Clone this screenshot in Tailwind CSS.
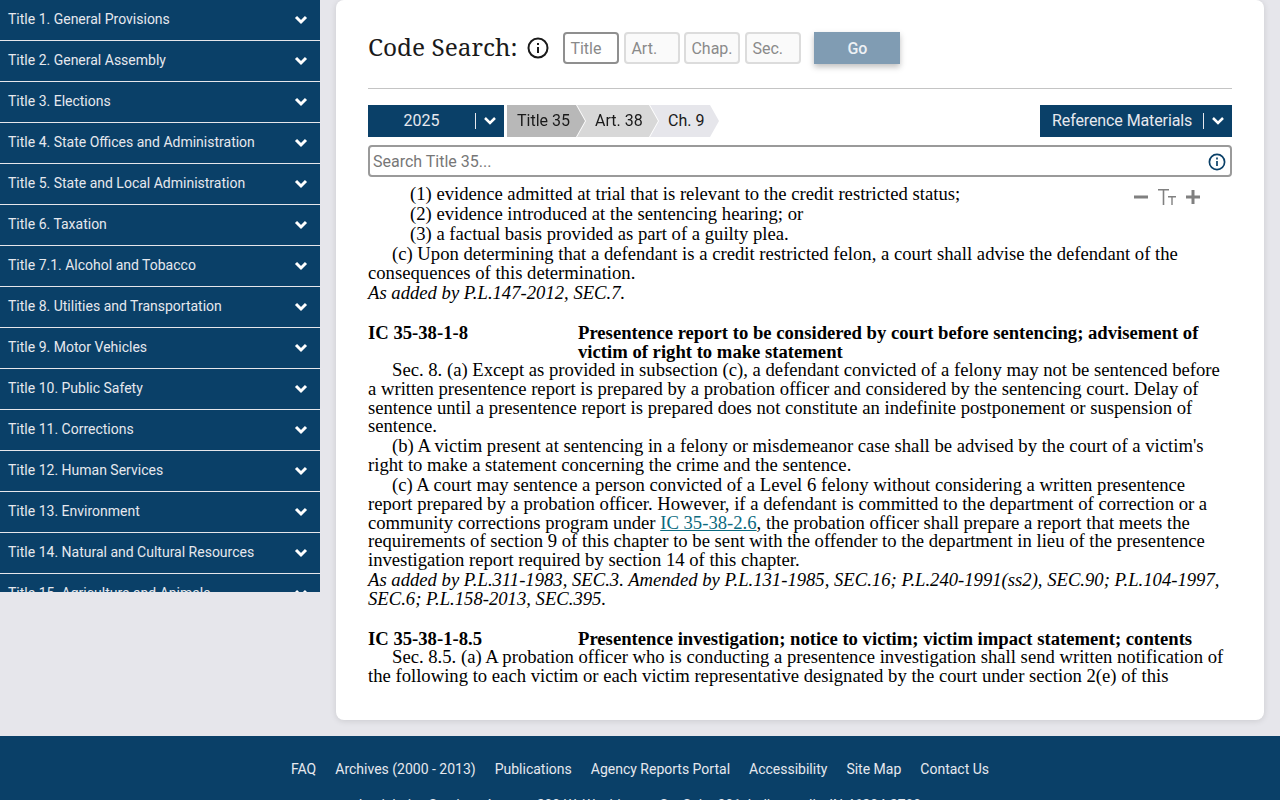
<!DOCTYPE html>
<html lang="en">
<head>
  <meta charset="UTF-8">
  <title>Indiana Code</title>
  <script src="https://cdn.jsdelivr.net/npm/@tailwindcss/browser@4"></script>
</head>
<body class="h-[800px] overflow-hidden bg-[#e6e6eb] font-['Roboto',sans-serif]">
  <div class="flex h-[736px] items-start">
    <!-- title list -->
    <nav class="h-[592px] w-[320px] shrink-0 overflow-hidden bg-[#0a4068] text-[14px] text-[#e6e8ee]">
      <div class="flex h-[41px] items-center justify-between border-b border-[#e6e6eb] pb-[1px] pl-2 pr-3"><span>Title 1. General Provisions</span><svg class="h-3 w-3.5" viewBox="0 0 14 12" fill="none" stroke="#fff" stroke-width="3"><path d="M2 3l5 5 5-5"/></svg></div>
      <div class="flex h-[41px] items-center justify-between border-b border-[#e6e6eb] pb-[1px] pl-2 pr-3"><span>Title 2. General Assembly</span><svg class="h-3 w-3.5" viewBox="0 0 14 12" fill="none" stroke="#fff" stroke-width="3"><path d="M2 3l5 5 5-5"/></svg></div>
      <div class="flex h-[41px] items-center justify-between border-b border-[#e6e6eb] pb-[1px] pl-2 pr-3"><span>Title 3. Elections</span><svg class="h-3 w-3.5" viewBox="0 0 14 12" fill="none" stroke="#fff" stroke-width="3"><path d="M2 3l5 5 5-5"/></svg></div>
      <div class="flex h-[41px] items-center justify-between border-b border-[#e6e6eb] pb-[1px] pl-2 pr-3"><span>Title 4. State Offices and Administration</span><svg class="h-3 w-3.5" viewBox="0 0 14 12" fill="none" stroke="#fff" stroke-width="3"><path d="M2 3l5 5 5-5"/></svg></div>
      <div class="flex h-[41px] items-center justify-between border-b border-[#e6e6eb] pb-[1px] pl-2 pr-3"><span>Title 5. State and Local Administration</span><svg class="h-3 w-3.5" viewBox="0 0 14 12" fill="none" stroke="#fff" stroke-width="3"><path d="M2 3l5 5 5-5"/></svg></div>
      <div class="flex h-[41px] items-center justify-between border-b border-[#e6e6eb] pb-[1px] pl-2 pr-3"><span>Title 6. Taxation</span><svg class="h-3 w-3.5" viewBox="0 0 14 12" fill="none" stroke="#fff" stroke-width="3"><path d="M2 3l5 5 5-5"/></svg></div>
      <div class="flex h-[41px] items-center justify-between border-b border-[#e6e6eb] pb-[1px] pl-2 pr-3"><span>Title 7.1. Alcohol and Tobacco</span><svg class="h-3 w-3.5" viewBox="0 0 14 12" fill="none" stroke="#fff" stroke-width="3"><path d="M2 3l5 5 5-5"/></svg></div>
      <div class="flex h-[41px] items-center justify-between border-b border-[#e6e6eb] pb-[1px] pl-2 pr-3"><span>Title 8. Utilities and Transportation</span><svg class="h-3 w-3.5" viewBox="0 0 14 12" fill="none" stroke="#fff" stroke-width="3"><path d="M2 3l5 5 5-5"/></svg></div>
      <div class="flex h-[41px] items-center justify-between border-b border-[#e6e6eb] pb-[1px] pl-2 pr-3"><span>Title 9. Motor Vehicles</span><svg class="h-3 w-3.5" viewBox="0 0 14 12" fill="none" stroke="#fff" stroke-width="3"><path d="M2 3l5 5 5-5"/></svg></div>
      <div class="flex h-[41px] items-center justify-between border-b border-[#e6e6eb] pb-[1px] pl-2 pr-3"><span>Title 10. Public Safety</span><svg class="h-3 w-3.5" viewBox="0 0 14 12" fill="none" stroke="#fff" stroke-width="3"><path d="M2 3l5 5 5-5"/></svg></div>
      <div class="flex h-[41px] items-center justify-between border-b border-[#e6e6eb] pb-[1px] pl-2 pr-3"><span>Title 11. Corrections</span><svg class="h-3 w-3.5" viewBox="0 0 14 12" fill="none" stroke="#fff" stroke-width="3"><path d="M2 3l5 5 5-5"/></svg></div>
      <div class="flex h-[41px] items-center justify-between border-b border-[#e6e6eb] pb-[1px] pl-2 pr-3"><span>Title 12. Human Services</span><svg class="h-3 w-3.5" viewBox="0 0 14 12" fill="none" stroke="#fff" stroke-width="3"><path d="M2 3l5 5 5-5"/></svg></div>
      <div class="flex h-[41px] items-center justify-between border-b border-[#e6e6eb] pb-[1px] pl-2 pr-3"><span>Title 13. Environment</span><svg class="h-3 w-3.5" viewBox="0 0 14 12" fill="none" stroke="#fff" stroke-width="3"><path d="M2 3l5 5 5-5"/></svg></div>
      <div class="flex h-[41px] items-center justify-between border-b border-[#e6e6eb] pb-[1px] pl-2 pr-3"><span>Title 14. Natural and Cultural Resources</span><svg class="h-3 w-3.5" viewBox="0 0 14 12" fill="none" stroke="#fff" stroke-width="3"><path d="M2 3l5 5 5-5"/></svg></div>
      <div class="flex h-[41px] items-center justify-between border-b border-[#e6e6eb] pb-[1px] pl-2 pr-3"><span>Title 15. Agriculture and Animals</span><svg class="h-3 w-3.5" viewBox="0 0 14 12" fill="none" stroke="#fff" stroke-width="3"><path d="M2 3l5 5 5-5"/></svg></div>
    </nav>

    <main class="ml-4 h-[720px] w-[928px] overflow-hidden rounded-lg bg-white px-8 shadow-[0_1px_6px_rgba(0,0,0,0.12)]">
      <!-- code search -->
      <div class="flex h-[89px] items-center border-b border-[#c4c4c4] pt-[8px]">
        <h1 class="pb-[2px] font-['Noto_Serif','DejaVu_Serif',serif] text-[24.4px] text-[#1a1a1a]">Code Search:</h1>
        <svg class="ml-[10px] h-[22px] w-[22px]" viewBox="0 0 22 22" fill="none" stroke="#1a1a1a" stroke-width="2"><circle cx="11" cy="11" r="9.5"/><path d="M11 10v6M11 6v2"/></svg>
        <div class="ml-[14px] flex h-8 w-14 items-center rounded border-2 border-[#8f8f8f] pl-[5px] pt-px text-base text-[#8a8a8a]">Title</div>
        <div class="ml-[5px] flex h-8 w-14 items-center rounded border-2 border-[#dcdcdc] bg-[#fafafa] pl-[5px] pt-px text-base text-[#8a8a8a]">Art.</div>
        <div class="ml-[4px] flex h-8 w-14 items-center rounded border-2 border-[#dcdcdc] bg-[#fafafa] pl-[5px] pt-px text-base text-[#8a8a8a]">Chap.</div>
        <div class="ml-[5px] flex h-8 w-14 items-center rounded border-2 border-[#dcdcdc] bg-[#fafafa] pl-[5px] pt-px text-base text-[#8a8a8a]">Sec.</div>
        <button class="ml-[13px] h-8 w-[86px] bg-[#809cb3] pt-px text-base font-medium text-[#eef1f5] shadow-[0_3px_6px_rgba(0,0,0,0.25)]">Go</button>
      </div>

      <!-- breadcrumb row -->
      <div class="mt-4 flex h-8 items-center text-base">
        <div class="flex h-8 w-[136px] items-center bg-[#0a4068] text-[#e6e8ee]">
          <span class="w-[107px] text-center">2025</span>
          <span class="h-4 w-px bg-[#e6e8ee]"></span>
          <svg class="ml-[7px] h-3 w-3.5" viewBox="0 0 14 12" fill="none" stroke="#fff" stroke-width="2.5"><path d="M2 3l5 5 5-5"/></svg>
        </div>
        <div class="ml-[3px] flex text-[#1a1a1a]">
          <div class="relative z-30 [filter:drop-shadow(1px_0_0_#fff)]"><div class="flex h-8 w-[78px] items-center bg-[#b8b8b8] pl-[10px] [clip-path:polygon(0_0,69px_0,100%_50%,69px_100%,0_100%)]">Title 35</div></div>
          <div class="relative z-20 -ml-[9px] [filter:drop-shadow(1px_0_0_#fff)]"><div class="flex h-8 w-[82px] items-center bg-[#d8d8d8] pl-[19px] [clip-path:polygon(0_0,73px_0,100%_50%,73px_100%,0_100%)]">Art. 38</div></div>
          <div class="relative z-10 -ml-[9px] flex h-8 w-[70px] items-center bg-[#e6e6eb] pl-[19px] [clip-path:polygon(0_0,61px_0,100%_50%,61px_100%,0_100%)]">Ch. 9</div>
        </div>
        <div class="ml-auto flex h-8 w-[192px] items-center bg-[#0a4068] pl-3 text-[#e6e8ee]">
          <span class="tracking-[-0.1px]">Reference Materials</span>
          <span class="ml-[11px] h-4 w-px bg-[#e6e8ee]"></span>
          <svg class="ml-[7px] h-3 w-3.5" viewBox="0 0 14 12" fill="none" stroke="#fff" stroke-width="2.5"><path d="M2 3l5 5 5-5"/></svg>
        </div>
      </div>

      <!-- search in title -->
      <div class="mt-2 flex h-8 items-center justify-between rounded border-2 border-[#9a9a9a] pl-[3px] pr-[4px] pt-px text-base text-[#777]">
        <span>Search Title 35...</span>
        <svg class="h-[18px] w-[18px]" viewBox="0 0 18 18" fill="none" stroke="#0a4068" stroke-width="1.7"><circle cx="9" cy="9" r="7.6"/><path d="M9 8v5M9 4.6v1.8"/></svg>
      </div>

      <!-- statute text -->
      <div class="relative mt-2 font-['Liberation_Serif',serif] text-[18.67px] leading-[18.67px] text-black">
        <div class="absolute right-[31px] top-[3px] flex items-center gap-[9px] text-[#808080]">
          <svg class="h-4 w-4" viewBox="0 0 16 16" fill="#808080"><rect x="1" y="6.5" width="14" height="3"/></svg>
          <svg class="h-[18px] w-[18px]" viewBox="0 0 18 18" fill="#808080"><path d="M0 1h11v1.6H6.300V17H4.700V2.600H0zM10 8h8v1.400h-3.300V17h-1.400V9.400H10z"/></svg>
          <svg class="h-4 w-4" viewBox="0 0 16 16" fill="#808080"><path d="M6.500 1h3v5.500H15v3H9.500V15h-3V9.500H1v-3h5.500z"/></svg>
        </div>
        <p class="mt-[1.4px] pl-[42px]">(1) evidence admitted at trial that is relevant to the credit restricted status;</p>
        <p class="mt-[1.4px] pl-[42px]">(2) evidence introduced at the sentencing hearing; or</p>
        <p class="mt-[1.4px] pl-[42px]">(3) a factual basis provided as part of a guilty plea.</p>
        <p class="mt-[1.4px] indent-6">(c) Upon determining that a defendant is a credit restricted felon, a court shall advise the defendant of the consequences of this determination.</p>
        <p class="mt-[1.4px] italic">As added by P.L.147-2012, SEC.7.</p>
        <div class="mt-[21.4px] flex font-bold"><span class="w-[210px] shrink-0">IC 35-38-1-8</span><span>Presentence report to be considered by court before sentencing; advisement of victim of right to make statement</span></div>
        <p class="indent-6">Sec. 8. (a) Except as provided in subsection (c), a defendant convicted of a felony may not be sentenced before a written presentence report is prepared by a probation officer and considered by the sentencing court. Delay of sentence until a presentence report is prepared does not constitute an indefinite postponement or suspension of sentence.</p>
        <p class="mt-[1.4px] indent-6">(b) A victim present at sentencing in a felony or misdemeanor case shall be advised by the court of a victim's right to make a statement concerning the crime and the sentence.</p>
        <p class="mt-[1.5px] indent-6">(c) A court may sentence a person convicted of a Level 6 felony without considering a written presentence report prepared by a probation officer. However, if a defendant is committed to the department of correction or a community corrections program under <a class="text-[#0b6a80] underline">IC 35-38-2.6</a>, the probation officer shall prepare a report that meets the requirements of section 9 of this chapter to be sent with the offender to the department in lieu of the presentence investigation report required by section 14 of this chapter.</p>
        <p class="mt-[1.4px] italic">As added by P.L.311-1983, SEC.3. Amended by P.L.131-1985, SEC.16; P.L.240-1991(ss2), SEC.90; P.L.104-1997, SEC.6; P.L.158-2013, SEC.395.</p>
        <div class="mt-[21.4px] flex font-bold"><span class="w-[210px] shrink-0">IC 35-38-1-8.5</span><span>Presentence investigation; notice to victim; victim impact statement; contents</span></div>
        <p class="indent-6">Sec. 8.5. (a) A probation officer who is conducting a presentence investigation shall send written notification of the following to each victim or each victim representative designated by the court under section 2(e) of this</p>
      </div>
    </main>
  </div>

  <footer class="h-[64px] overflow-hidden bg-[#0a4068] pt-[23px] text-[14px] text-[#e6e8ee]">
    <div class="flex justify-center gap-[19px]">
      <a>FAQ</a><a>Archives (2000 - 2013)</a><a>Publications</a><a>Agency Reports Portal</a><a>Accessibility</a><a>Site Map</a><a>Contact Us</a>
    </div>
    <p class="mt-[15px] text-center">Legislative Services Agency, 200 W. Washington St., Suite 301, Indianapolis, IN 46204-2789</p>
  </footer>
</body>
</html>
